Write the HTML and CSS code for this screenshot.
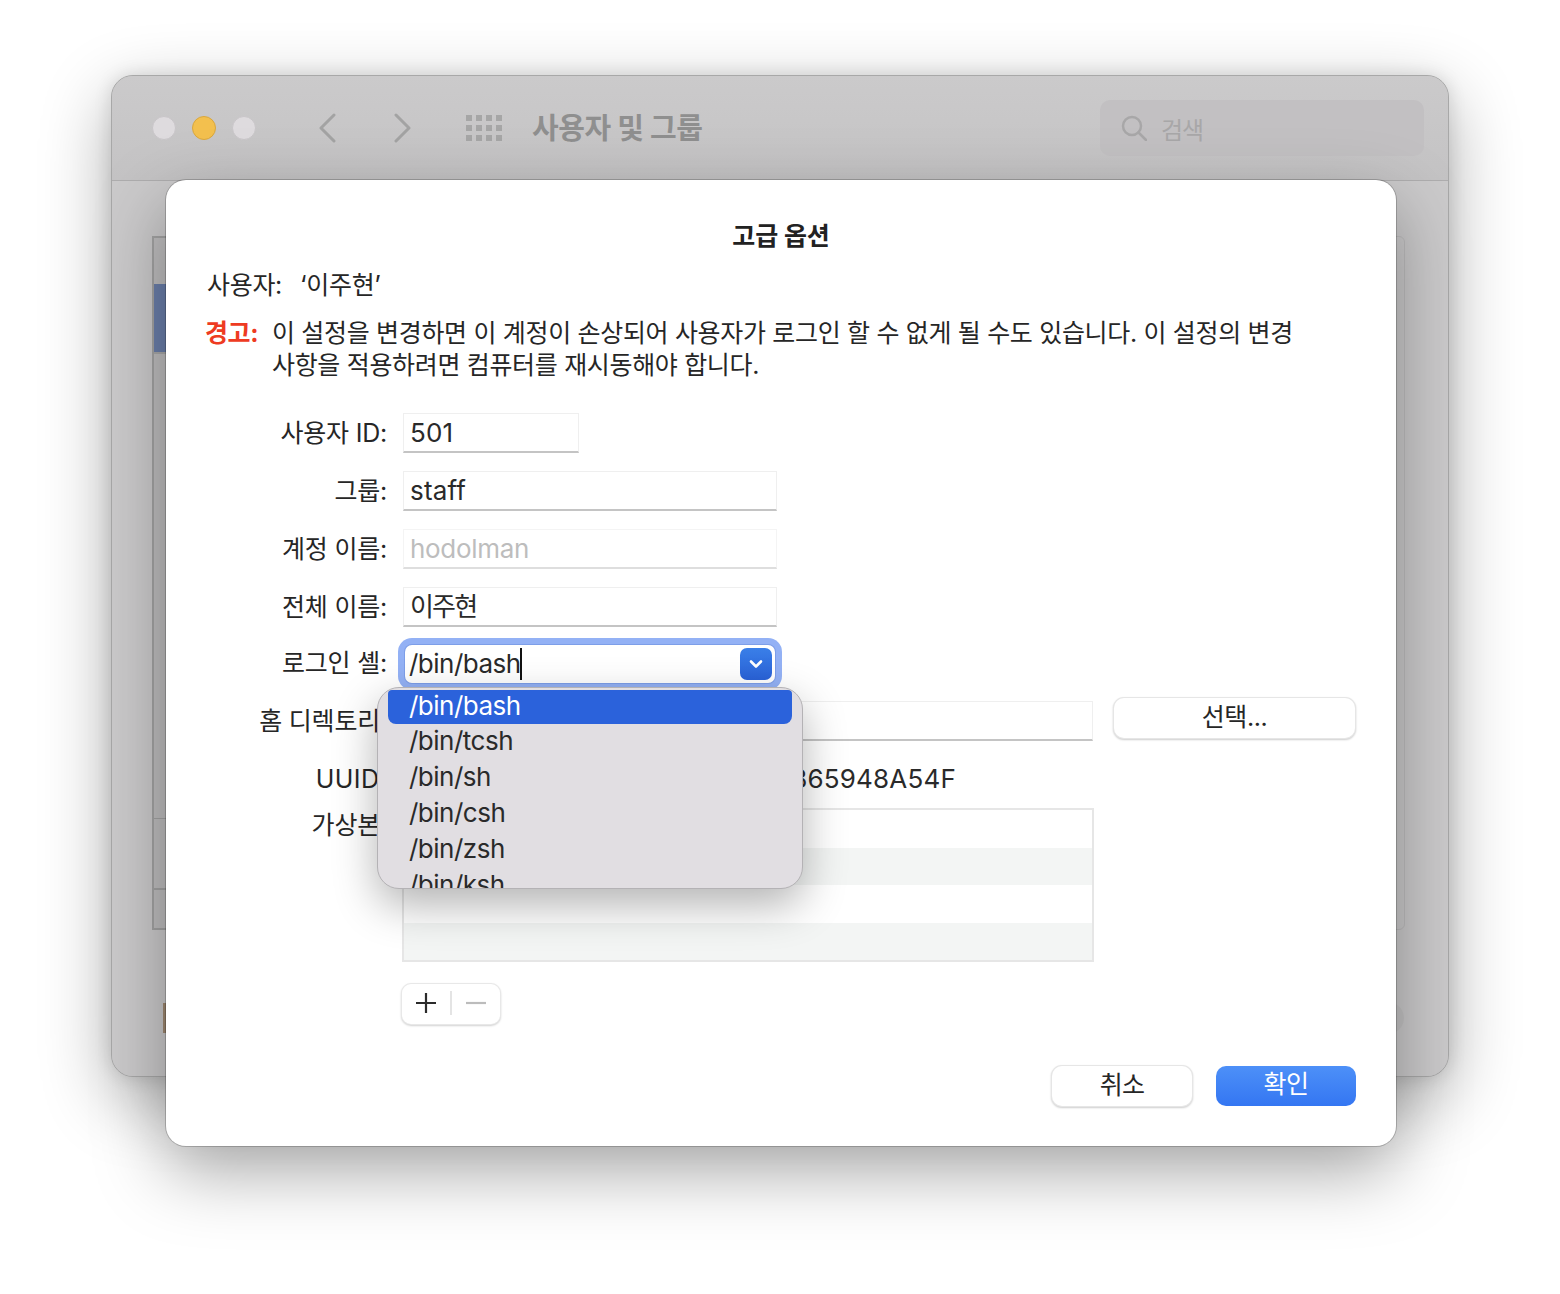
FILE: index.html
```html
<!DOCTYPE html>
<html lang="ko">
<head>
<meta charset="utf-8">
<title>고급 옵션</title>
<link rel="stylesheet" href="styles.css">
</head>
<body>
<div class="desktop">
  <section class="window">
    <header class="toolbar">
      <div class="lights">
        <span class="light"></span>
        <span class="light light-amber"></span>
        <span class="light"></span>
      </div>
      <svg class="nav-icon" width="20" height="30" viewBox="0 0 20 30"><path d="M17 2 4 15l13 13" /></svg>
      <svg class="nav-icon nav-next" width="20" height="30" viewBox="0 0 20 30"><path d="M3 2l13 13L3 28" /></svg>
      <svg class="grid-icon" width="36" height="26" viewBox="0 0 36 26">
        <g fill="#a6a6a6">
          <rect x="0" y="0" width="6" height="6"/><rect x="10" y="0" width="6" height="6"/><rect x="20" y="0" width="6" height="6"/><rect x="30" y="0" width="6" height="6"/>
          <rect x="0" y="10" width="6" height="6"/><rect x="10" y="10" width="6" height="6"/><rect x="20" y="10" width="6" height="6"/><rect x="30" y="10" width="6" height="6"/>
          <rect x="0" y="20" width="6" height="6"/><rect x="10" y="20" width="6" height="6"/><rect x="20" y="20" width="6" height="6"/><rect x="30" y="20" width="6" height="6"/>
        </g>
      </svg>
      <h1 class="window-title">사용자 및 그룹</h1>
      <div class="search">
        <svg width="26" height="26" viewBox="0 0 26 26" class="search-icon"><circle cx="11" cy="11" r="9"/><path d="M17.500 17.500 25 25"/></svg>
        <span>검색</span>
      </div>
    </header>
    <div class="window-body">
      <div class="side-panel">
        <div class="side-selected"></div>
        <div class="side-row-a"></div>
        <div class="side-row-b"></div>
      </div>
      <div class="side-lock"></div>
      <div class="right-panel"></div>
      <div class="right-circle"></div>
    </div>
  </section>

  <section class="sheet">
    <h2 class="sheet-title">고급 옵션</h2>
    <div class="user-line"><span>사용자:</span><span>‘이주현’</span></div>
    <div class="warning">
      <strong>경고:</strong>
      <p>이 설정을 변경하면 이 계정이 손상되어 사용자가 로그인 할 수 없게 될 수도 있습니다. 이 설정의 변경<br>사항을 적용하려면 컴퓨터를 재시동해야 합니다.</p>
    </div>

    <div class="form">
      <div class="row row-id"><label>사용자 ID:</label><div class="field field-short">501</div></div>
      <div class="row row-group"><label>그룹:</label><div class="field field-mid">staff</div></div>
      <div class="row row-account"><label>계정 이름:</label><div class="field field-mid field-off">hodolman</div></div>
      <div class="row row-full"><label>전체 이름:</label><div class="field field-mid field-kr">이주현</div></div>
      <div class="row row-shell"><label>로그인 셸:</label>
        <div class="combo">
          <span class="combo-text">/bin/bash</span><span class="caret"></span>
          <span class="combo-btn"><svg width="14" height="10" viewBox="0 0 14 10"><path d="M2 2.500 7 7.500l5-5"/></svg></span>
        </div>
      </div>
      <div class="row row-home"><label>홈 디렉토리:</label><div class="field field-wide">/Users/hodolman</div><button class="btn btn-choose">선택...</button></div>
      <div class="row row-uuid"><label>UUID:</label><div class="value">E7F4D3A2-91C6-4B58-A0D7-B65948A54F</div></div>
      <div class="row row-alias"><label>가상본:</label>
        <div class="list"><div class="stripe"></div><div class="stripe alt"></div><div class="stripe"></div><div class="stripe alt"></div></div>
      </div>
      <div class="row row-add">
        <div class="addremove">
          <svg width="24" height="24" viewBox="0 0 24 24" class="pm"><path d="M12 2v20M2 12h20"/></svg>
          <i></i>
          <svg width="24" height="24" viewBox="0 0 24 24" class="pm pm-off"><path d="M2 12h20"/></svg>
        </div>
      </div>
    </div>

    <footer class="actions">
      <button class="btn btn-cancel">취소</button>
      <button class="btn btn-ok">확인</button>
    </footer>

    <ul class="menu">
      <li class="sel">/bin/bash</li>
      <li>/bin/tcsh</li>
      <li>/bin/sh</li>
      <li>/bin/csh</li>
      <li>/bin/zsh</li>
      <li>/bin/ksh</li>
    </ul>
  </section>
</div>
</body>
</html>
```
FILE: styles.css
```css
* { box-sizing: border-box; }
html, body { margin: 0; padding: 0; background: #fff; }
body { font-family: Inter, "Noto Sans CJK KR", sans-serif; color: #262626; }
.desktop { position: relative; width: 1560px; height: 1294px; overflow: hidden; }

.window {
  position: absolute; left: 111px; top: 75px; width: 1338px; height: 1002px;
  border-radius: 22px; border: 1px solid #a8a8a8;
  background: #c8c7c8;
  box-shadow: 0 22px 70px rgba(0,0,0,.32), 0 0 18px rgba(0,0,0,.12);
  overflow: hidden;
}
.toolbar {
  height: 105px; display: flex; align-items: center;
  background: linear-gradient(#cbcacb, #c4c3c4);
  border-bottom: 1px solid #aeadae;
  padding: 0 24px 0 40px; position: relative;
}
.lights { display: flex; gap: 16px; margin-right: 61px; }
.light { width: 24px; height: 24px; border-radius: 50%; background: #dedbde; border: 1px solid #c8c5c8; }
.light-amber { background: #f3c04e; border-color: #d9a73e; }
.nav-icon { fill: none; stroke: #a3a3a3; stroke-width: 3; stroke-linecap: round; stroke-linejoin: round; margin-right: 56px; }
.nav-next { margin-right: 53px; }
.grid-icon { margin-right: 30px; margin-top: -1px; }
.window-title { margin: 0 0 5px; font-size: 29px; font-weight: 700; color: #8f8f8f; letter-spacing: -.4px; }
.search {
  margin-left: auto; width: 324px; height: 56px; border-radius: 10px;
  background: #c2c0c2; display: flex; align-items: center; gap: 14px;
  padding-left: 21px; color: #a8a7a8; font-size: 24px; letter-spacing: -1px;
}
.search-icon { fill: none; stroke: #a8a7a8; stroke-width: 2.500; stroke-linecap: round; }
.window-body { position: relative; height: 895px; background: #cbcacb; }
.side-panel {
  position: absolute; left: 40px; top: 55px; width: 60px; height: 694px;
  border: 2px solid #a3a3a3; background: #bfbebf;
}
.side-selected { position: absolute; left: 0; top: 46px; width: 100%; height: 70px; background: #6b7fab; border-bottom: 2px solid #a8a8a8; }
.side-row-a { position: absolute; left: 0; top: 580px; width: 100%; height: 1px; background: #a3a3a3; }
.side-row-b { position: absolute; left: 0; top: 650px; width: 100%; height: 2px; background: #a3a3a3; }
.side-lock { position: absolute; left: 51px; top: 822px; width: 12px; height: 30px; background: #a08a72; }
.right-panel { position: absolute; left: 1240px; top: 55px; width: 53px; height: 694px; border: 1px solid #bdbcbd; border-radius: 6px; }
.right-circle { position: absolute; left: 1260px; top: 821px; width: 32px; height: 32px; background: #c4c3c4; border-radius: 50%; }

.sheet {
  position: absolute; left: 166px; top: 180px; width: 1230px; height: 966px;
  background: #fff; border-radius: 20px;
  box-shadow: 0 0 0 1px rgba(0,0,0,.2), 0 26px 70px rgba(0,0,0,.34);
  padding: 38px 40px 0 40px;
  display: flex; flex-direction: column;
}
.sheet-title { margin: 0; text-align: center; font-size: 25px; line-height: 36px; font-weight: 700; letter-spacing: -.1px; color: #222; }
.user-line { display: flex; gap: 18px; margin-top: 13px; margin-left: 1px; font-size: 25px; line-height: 36px; letter-spacing: -.3px; }
.warning { display: flex; margin-top: 14px; font-size: 25px; line-height: 32px; letter-spacing: -.33px; }
.warning strong { width: 67px; margin-left: -1px; flex: none; color: #ee3b22; font-weight: 700; letter-spacing: -.4px; }
.warning p { margin: 0; white-space: nowrap; }

.form { position: relative; margin-top: 32px; display: flex; flex-direction: column; }
.row { display: flex; align-items: flex-start; position: relative; }
.row label { width: 181px; flex: none; text-align: right; font-size: 25px; line-height: 40px; letter-spacing: -.2px; white-space: nowrap; }
.row > label { margin-right: 16px; }
.field {
  height: 40px; border: 1px solid #efefef; border-bottom: 2px solid #c4c4c4; background: #fff;
  padding-left: 6px; font-size: 26px; line-height: 38px; letter-spacing: .2px; color: #2a2a2a; white-space: nowrap;
}
.field-short { width: 176px; }
.field-mid { width: 374px; }
.field-wide { width: 690px; }
.field-off { color: #bdbdbd; border-bottom-color: #dedede; border-color: #f4f4f4 #f4f4f4 #dedede; letter-spacing: -.3px; }
.field-kr { letter-spacing: -1.800px; }
.row-group, .row-account { margin-top: 18px; }
.row-full { margin-top: 18px; }
.row-shell { margin-top: 16px; }
.combo {
  width: 370px; height: 38px; margin: 2px 0 0 2px; position: relative;
  background: #fff; border-radius: 7px;
  box-shadow: 0 0 0 1px #7d9ee8, 0 0 0 7px #93b1f5;
  padding-left: 4px; font-size: 26px; letter-spacing: -.5px; line-height: 38px; color: #2a2a2a;
  display: flex; align-items: center;
}
.caret { width: 2px; height: 32px; background: #111; margin-left: -1px; }
.combo-btn {
  position: absolute; right: 3px; top: 3px; width: 32px; height: 32px; border-radius: 7px;
  background: linear-gradient(#3a7fe8, #2a62d8);
  display: flex; align-items: center; justify-content: center;
}
.combo-btn path { fill: none; stroke: #fff; stroke-width: 2.600; stroke-linecap: round; stroke-linejoin: round; }
.row-home { margin-top: 18px; }
.btn { font-family: inherit; font-size: 25px; border: none; border-radius: 10px; background: #fff; color: #262626; cursor: default; padding: 0; }
.btn-choose, .btn-cancel { box-shadow: 0 0 0 1px #e6e6e6, 0 1px 2px 1px rgba(0,0,0,.2); letter-spacing: -.4px; }
.btn-choose { position: absolute; left: 908px; top: -3px; width: 241px; height: 40px; line-height: 36px; padding-bottom: 2px; }
.row-uuid { margin-top: 18px; }
.row-uuid label { letter-spacing: .4px; }
.value { padding-left: 9px; font-size: 26px; line-height: 40px; letter-spacing: .2px; white-space: nowrap; color: #2a2a2a; }
.row-alias { margin-top: 9px; }
.row-alias label { margin-top: -3px; }
.list { width: 692px; height: 154px; margin-left: -1px; border: 2px solid #e6e6e6; background: #fff; display: flex; flex-direction: column; }
.stripe { height: 38px; }
.stripe.alt { background: #f3f5f4; }
.row-add { margin-top: 22px; padding-left: 196px; }
.addremove {
  width: 98px; height: 40px; border-radius: 9px; background: #fff;
  box-shadow: 0 0 0 1px #e8e8e8, 0 1px 2px 1px rgba(0,0,0,.18);
  display: flex; align-items: center; justify-content: space-between; padding: 0 12px 2px 12px;
}
.addremove i { width: 2px; height: 24px; background: #e4e4e4; }
.pm { fill: none; stroke: #2b2b2b; stroke-width: 2.200; }
.pm-off { stroke: #bcbcbc; }
.actions { position: absolute; right: 40px; top: 886px; display: flex; gap: 24px; }
.btn-cancel, .btn-ok { height: 40px; width: 140px; line-height: 36px; padding-bottom: 4px; }
.btn-cancel { padding-bottom: 2px; letter-spacing: -.8px; }
.btn-ok { color: #fff; background: linear-gradient(#4d90f8, #3476f2); letter-spacing: -.5px; }

.menu {
  position: absolute; left: 211px; top: 507px; width: 426px; height: 202px;
  margin: 0; padding: 2px 10px 0; list-style: none; overflow: hidden;
  background: #e1dee2; border-radius: 22px;
  border: 1px solid #b4b2b5;
  box-shadow: 0 16px 44px rgba(0,0,0,.3);
  font-size: 26px; letter-spacing: -.5px; line-height: 36px; color: #2a2a2a;
}
.menu li { padding-left: 21px; height: 36px; line-height: 34px; }
.menu li.sel { background: #2b62db; color: #fff; border-radius: 4px 4px 8px 8px; height: 34px; line-height: 32px; }
```
